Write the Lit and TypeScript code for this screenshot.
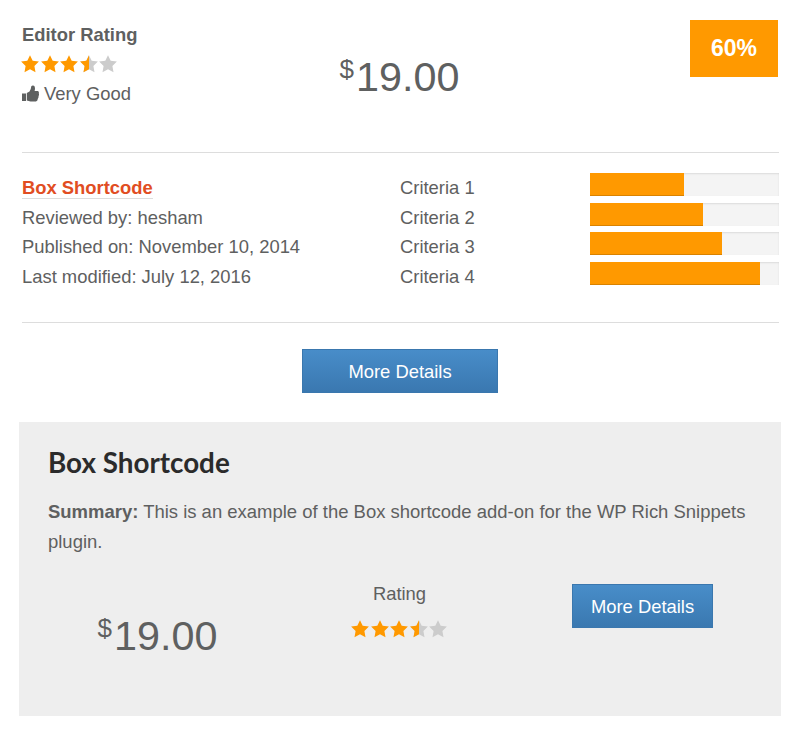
import { LitElement, html, svg, css } from "lit";
import { customElement, property } from "lit/decorators.js";

const STAR = "M9 0.2 L11.7 5.8 L17.9 6.6 L13.4 11 L14.5 17.2 L9 14.3 L3.5 17.2 L4.6 11 L0.1 6.6 L6.3 5.8 Z";

function starPath(cls: string, clip: string) {
  return clip
    ? svg`<path class=${cls} d=${STAR} clip-path=${clip}></path>`
    : svg`<path class=${cls} d=${STAR}></path>`;
}

@customElement("star-rating")
class StarRating extends LitElement {
  @property({ type: Number }) value = 0;
  static styles = css`
    :host { display: flex; gap: 1.5px; }
    svg { display: block; width: 18px; height: 18px; }
    .off { fill: #ccc; }
    .on { fill: #ff9900; }
  `;
  render() {
    return [0, 1, 2, 3, 4].map((i) => {
      const part = Math.max(0, Math.min(1, this.value - i));
      return html`<svg viewBox="0 0 18 18">
        <defs><clipPath id="c${i}"><rect x="0" y="0" width=${18 * part} height="18"></rect></clipPath></defs>
        ${part < 1 ? starPath("off", "") : ""}
        ${part > 0 ? starPath("on", `url(#c${i})`) : ""}
      </svg>`;
    });
  }
}

@customElement("app-root")
class AppRoot extends LitElement {
  static styles = css`
    :host {
      display: block;
      box-sizing: border-box;
      height: 735px;
      padding: 20px 19px 0;
      background: #fff;
      color: #5e6060;
      font: 18.4px/29.5px "Liberation Sans", Arial, sans-serif;
    }
    .review { padding: 0 2px 0 3px; }
    .top {
      display: grid;
      grid-template-columns: 1fr 1fr 1fr;
      height: 132px;
      border-bottom: 1px solid #ddd;
    }
    .label { font-weight: bold; }
    .verdict { display: flex; align-items: center; gap: 5px; }
    .thumb { width: 17px; height: 17px; fill: currentColor; }
    .top star-rating { height: 29.5px; align-items: center; margin-left: -1px; }
    .price { font-size: 41.3px; line-height: 50px; text-align: center; white-space: nowrap; }
    .price sup { font-size: 26px; line-height: 0; vertical-align: 13px; margin-right: 2px; }
    .top .price { padding: 32px 2px 0 0; }
    .score {
      justify-self: end;
      width: 88px;
      height: 57px;
      margin-right: 1px;
      background: #ff9900;
      color: #fff;
      font-weight: bold;
      font-size: 23px;
      line-height: 57px;
      text-align: center;
    }
    .info {
      display: grid;
      grid-template-columns: 378px 189.5px 1fr;
      height: 149px;
      padding-top: 20px;
      border-bottom: 1px solid #ddd;
    }
    .link { color: #e14d22; font-weight: bold; text-decoration: none; border-bottom: 1px solid #ddd; }
    .bars { display: flex; flex-direction: column; gap: 6.5px; }
    .track { height: 23px; background: #f4f4f4; box-shadow: inset 0 1px 2px rgba(0, 0, 0, 0.1); }
    .fill { height: 23px; background: #ff9900; box-shadow: inset 0 -1px 0 rgba(0, 0, 0, 0.15); }
    .btn {
      box-sizing: border-box;
      height: 44px;
      border: 1px solid #3a77ae;
      background: linear-gradient(#488dc9, #3a78b0);
      color: #fff;
      font: 18.4px/42px "Liberation Sans", Arial, sans-serif;
      text-align: center;
      padding: 1px 0 0;
    }
    .wide { display: block; width: 196px; margin: 26px auto 29px 280px; }
    .box {
      box-sizing: border-box;
      height: 294px;
      width: 762px;
      padding: 21px 29px 0;
      background: #eee;
    }
    .title { margin: 0; color: #2b2b2b; font: 700 27.8px/40px Lato, sans-serif; }
    .summary { margin: 14px 0 0; font-size: 18.48px; }
    .offer { display: grid; grid-template-columns: 219px 264px 1fr; padding-top: 23px; }
    .offer .price { padding-top: 32px; }
    .rating { display: flex; flex-direction: column; align-items: center; }
    .rating span { padding-left: 1px; }
    .rating star-rating { margin-top: 11px; }
    .narrow { width: 141px; margin: 5px 0 0 41px; }
  `;
  render() {
    return html`
      <section class="review">
        <div class="top">
          <div>
            <div class="label">Editor Rating</div>
            <star-rating .value=${3.5}></star-rating>
            <div class="verdict">
              <svg class="thumb" viewBox="0 0 17 17"><path d="M0 8.5h4v7.5H0z M4.8 8 L7.5 6.5 Q9 4.5 9.3 1.2 Q10.4 0 12 0.8 Q13.6 2.2 12.6 6 H16 Q17.3 7 16.8 8.6 Q17.4 10 16.5 11.2 Q16.8 12.6 15.8 13.8 Q15.8 16 14 16.5 H8.5 L4.8 15.5 Z"></path></svg>
              <span>Very Good</span>
            </div>
          </div>
          <div class="price"><sup>$</sup>19.00</div>
          <div class="score">60%</div>
        </div>
        <div class="info">
          <div>
            <div><a class="link">Box Shortcode</a></div>
            <div>Reviewed by: hesham</div>
            <div>Published on: November 10, 2014</div>
            <div>Last modified: July 12, 2016</div>
          </div>
          <div>${[1, 2, 3, 4].map((n) => html`<div>Criteria ${n}</div>`)}</div>
          <div class="bars">
            ${[50, 60, 70, 90].map((p) => html`<div class="track"><div class="fill" style="width:${p}%"></div></div>`)}
          </div>
        </div>
        <button class="btn wide">More Details</button>
      </section>
      <section class="box">
        <h2 class="title">Box Shortcode</h2>
        <p class="summary"><b>Summary:</b> This is an example of the Box shortcode add-on for the WP Rich Snippets plugin.</p>
        <div class="offer">
          <div class="price"><sup>$</sup>19.00</div>
          <div class="rating"><span>Rating</span><star-rating .value=${3.5}></star-rating></div>
          <button class="btn narrow">More Details</button>
        </div>
      </section>
    `;
  }
}
